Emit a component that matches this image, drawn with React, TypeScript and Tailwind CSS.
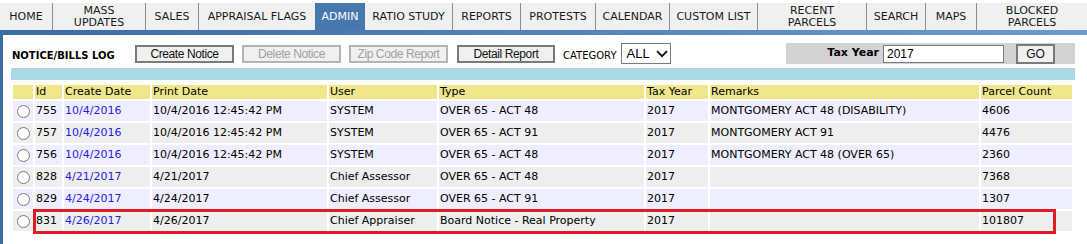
import React from "react";

const tabs = [
  { label: ["HOME"], w: "w-[53px]" },
  { label: ["MASS", "UPDATES"], w: "w-[93px]" },
  { label: ["SALES"], w: "w-[53px]" },
  { label: ["APPRAISAL FLAGS"], w: "w-[116px]", noSep: true },
  { label: ["ADMIN"], w: "w-[50px]", active: true },
  { label: ["RATIO STUDY"], w: "w-[88px]" },
  { label: ["REPORTS"], w: "w-[68px]" },
  { label: ["PROTESTS"], w: "w-[75px]" },
  { label: ["CALENDAR"], w: "w-[74px]" },
  { label: ["CUSTOM LIST"], w: "w-[88px]" },
  { label: ["RECENT", "PARCELS"], w: "w-[109px]" },
  { label: ["SEARCH"], w: "w-[59px]" },
  { label: ["MAPS"], w: "w-[51px]" },
  { label: ["BLOCKED", "PARCELS"], w: "flex-1", noSep: true },
];

const rows = [
  ["755", "10/4/2016", "10/4/2016 12:45:42 PM", "SYSTEM", "OVER 65 - ACT 48", "2017", "MONTGOMERY ACT 48 (DISABILITY)", "4606"],
  ["757", "10/4/2016", "10/4/2016 12:45:42 PM", "SYSTEM", "OVER 65 - ACT 91", "2017", "MONTGOMERY ACT 91", "4476"],
  ["756", "10/4/2016", "10/4/2016 12:45:42 PM", "SYSTEM", "OVER 65 - ACT 48", "2017", "MONTGOMERY ACT 48 (OVER 65)", "2360"],
  ["828", "4/21/2017", "4/21/2017", "Chief Assessor", "OVER 65 - ACT 48", "2017", "", "7368"],
  ["829", "4/24/2017", "4/24/2017", "Chief Assessor", "OVER 65 - ACT 91", "2017", "", "1307"],
  ["831", "4/26/2017", "4/26/2017", "Chief Appraiser", "Board Notice - Real Property", "2017", "", "101807"],
];

const headers = ["", "Id", "Create Date", "Print Date", "User", "Type", "Tax Year", "Remarks", "Parcel Count"];
const colWidths = ["w-[20px]", "w-[27px]", "w-[86px]", "w-[175px]", "w-[108px]", "w-[205px]", "w-[62px]", "w-[269px]", "w-[91px]"];

function Btn({ children, disabled, className = "" }: { children: React.ReactNode; disabled?: boolean; className?: string }) {
  return (
    <button
      className={`h-[18px] bg-[#f0f0f0] border-2 font-['Liberation_Sans',Arial,sans-serif] text-[12px] tracking-[-0.4px] leading-none flex items-center justify-center ${
        disabled ? "border-[#b4b4b4] text-[#a0a0a0]" : "border-[#7a7a7a] text-[#111]"
      } ${className}`}
    >
      {children}
    </button>
  );
}

export default function App() {
  return (
    <div className="relative w-[1087px] h-[244px] bg-white overflow-hidden font-['DejaVu_Sans',Verdana,sans-serif] text-[11px] text-black">
      {/* Nav */}
      <div className="pt-[3px] flex">
        {tabs.map((t, i) => (
          <div
            key={i}
            className={`${t.w} h-[27px] flex flex-col items-center justify-center leading-[12px] text-center ${
              t.active ? "bg-[#4677ae] text-white" : "bg-[#f0f0f0] text-[#1a1a1a]"
            } ${!t.noSep && !t.active ? "border-r border-[#8c8c8c]" : ""}`}
          >
            {t.label.map((l) => (
              <span key={l}>{l}</span>
            ))}
          </div>
        ))}
      </div>
      <div className="h-[5px] bg-gradient-to-r from-[#3b6aa4] to-[#6a9bd0]" />

      {/* Panel */}
      <div className="border-l-[3px] border-[#3e6ea7] h-[209px] pl-[8px] pr-[12px] pt-[8px]">
        <div className="flex items-center h-[21px]">
          <div className="w-[124px] pl-[1px] pt-[3px] font-bold text-[10px]">NOTICE/BILLS LOG</div>
          <Btn className="w-[99px]">Create Notice</Btn>
          <Btn disabled className="w-[99px] ml-[8px]">Delete Notice</Btn>
          <Btn disabled className="w-[99px] ml-[8px]">Zip Code Report</Btn>
          <Btn className="w-[98px] ml-[9px]">Detail Report</Btn>
          <span className="ml-[8px] text-[10px] pt-[3px]">CATEGORY</span>
          <div className="ml-[4px] w-[50px] h-[21px] border border-[#7a7a7a] bg-white flex items-center pl-[5px] gap-[6px] font-['Liberation_Sans',Arial,sans-serif] text-[13px]">
            <span>ALL</span>
            <svg width="12" height="8" viewBox="0 0 12 8">
              <path d="M1 1.2 L6 6.2 L11 1.2" fill="none" stroke="#111" strokeWidth="1.8" />
            </svg>
          </div>
          <div className="ml-auto w-[289px] h-[21px] bg-[#d3d3d3] flex items-center justify-end pr-[20px]">
            <span className="font-bold text-[11px] mr-[4px]">Tax Year</span>
            <div className="w-[121px] h-[18px] bg-white border border-[#7a7a7a] flex items-center pl-[3px] font-['Liberation_Sans',Arial,sans-serif] text-[12px]">
              2017
            </div>
            <Btn className="w-[39px] h-[20px] ml-[12px] !text-[12px] tracking-normal">GO</Btn>
          </div>
        </div>

        <div className="mt-[4px] h-[12px] bg-[#add8e6]" />

        <table className="mt-[3px] table-fixed border-separate border-spacing-[2px]">
          <colgroup>
            {colWidths.map((w, i) => (
              <col key={i} className={w} />
            ))}
          </colgroup>
          <thead>
            <tr>
              {headers.map((h, i) => (
                <th key={i} className="bg-[#f0e68c] h-[14px] px-[1px] text-left font-normal leading-[14px] whitespace-nowrap">
                  {h}
                </th>
              ))}
            </tr>
          </thead>
          <tbody>
            {rows.map((r, ri) => (
              <tr key={ri} className={ri % 2 === 0 ? "bg-[#eeeeff]" : "bg-[#eeeeee]"}>
                <td className="h-[20px] p-0">
                  <div className="flex justify-center">
                    <span className="w-[13px] h-[13px] rounded-full border border-[#7b7b7b] bg-white" />
                  </div>
                </td>
                {r.map((c, ci) => (
                  <td
                    key={ci}
                    className={`h-[20px] px-[1px] whitespace-nowrap ${ci === 1 ? "text-[#1f1fe6]" : ""}`}
                  >
                    {c}
                  </td>
                ))}
              </tr>
            ))}
          </tbody>
        </table>
      </div>

      {/* highlight annotation */}
      <div className="absolute left-[33px] top-[209px] w-[1023px] h-[25px] border-[3px] border-[#e01b24] pointer-events-none" />
    </div>
  );
}
